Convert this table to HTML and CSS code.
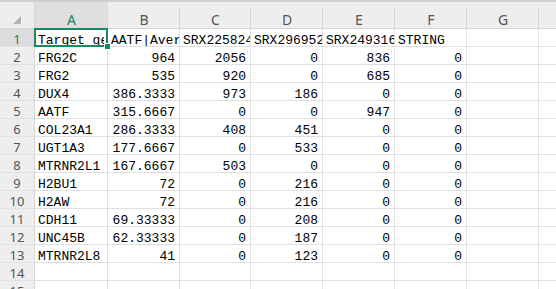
FILE: index.html
```html
<!DOCTYPE html>
<html>
<head>
<meta charset="utf-8">
<link rel="stylesheet" href="styles.css">
</head>
<body>
<div class="sheet">
  <div class="corner"><svg width="8" height="8" viewBox="0 0 8 8"><path d="M8 0V8H0Z" fill="#b4b4b4"/></svg></div>
  <div class="ch active">A</div><div class="ch">B</div><div class="ch">C</div><div class="ch">D</div><div class="ch">E</div><div class="ch">F</div><div class="ch">G</div><div class="ch last"></div>

  <div class="rh active">1</div>
  <div class="c sel-cell"><span class="txt">Target gene</span><div class="sel"><span class="handle"></span></div></div><div class="c">AATF|Average</div><div class="c">SRX2258241</div><div class="c">SRX2969521</div><div class="c">SRX2493160</div><div class="c">STRING</div><div class="c"></div><div class="c"></div>

  <div class="rh">2</div>
  <div class="c">FRG2C</div><div class="c n">964</div><div class="c n">2056</div><div class="c n">0</div><div class="c n">836</div><div class="c n">0</div><div class="c"></div><div class="c"></div>

  <div class="rh">3</div>
  <div class="c">FRG2</div><div class="c n">535</div><div class="c n">920</div><div class="c n">0</div><div class="c n">685</div><div class="c n">0</div><div class="c"></div><div class="c"></div>

  <div class="rh">4</div>
  <div class="c">DUX4</div><div class="c n">386.3333</div><div class="c n">973</div><div class="c n">186</div><div class="c n">0</div><div class="c n">0</div><div class="c"></div><div class="c"></div>

  <div class="rh">5</div>
  <div class="c">AATF</div><div class="c n">315.6667</div><div class="c n">0</div><div class="c n">0</div><div class="c n">947</div><div class="c n">0</div><div class="c"></div><div class="c"></div>

  <div class="rh">6</div>
  <div class="c">COL23A1</div><div class="c n">286.3333</div><div class="c n">408</div><div class="c n">451</div><div class="c n">0</div><div class="c n">0</div><div class="c"></div><div class="c"></div>

  <div class="rh">7</div>
  <div class="c">UGT1A3</div><div class="c n">177.6667</div><div class="c n">0</div><div class="c n">533</div><div class="c n">0</div><div class="c n">0</div><div class="c"></div><div class="c"></div>

  <div class="rh">8</div>
  <div class="c">MTRNR2L1</div><div class="c n">167.6667</div><div class="c n">503</div><div class="c n">0</div><div class="c n">0</div><div class="c n">0</div><div class="c"></div><div class="c"></div>

  <div class="rh">9</div>
  <div class="c">H2BU1</div><div class="c n">72</div><div class="c n">0</div><div class="c n">216</div><div class="c n">0</div><div class="c n">0</div><div class="c"></div><div class="c"></div>

  <div class="rh">10</div>
  <div class="c">H2AW</div><div class="c n">72</div><div class="c n">0</div><div class="c n">216</div><div class="c n">0</div><div class="c n">0</div><div class="c"></div><div class="c"></div>

  <div class="rh">11</div>
  <div class="c">CDH11</div><div class="c n">69.33333</div><div class="c n">0</div><div class="c n">208</div><div class="c n">0</div><div class="c n">0</div><div class="c"></div><div class="c"></div>

  <div class="rh">12</div>
  <div class="c">UNC45B</div><div class="c n">62.33333</div><div class="c n">0</div><div class="c n">187</div><div class="c n">0</div><div class="c n">0</div><div class="c"></div><div class="c"></div>

  <div class="rh">13</div>
  <div class="c">MTRNR2L8</div><div class="c n">41</div><div class="c n">0</div><div class="c n">123</div><div class="c n">0</div><div class="c n">0</div><div class="c"></div><div class="c"></div>

  <div class="rh">14</div>
  <div class="c"></div><div class="c"></div><div class="c"></div><div class="c"></div><div class="c"></div><div class="c"></div><div class="c"></div><div class="c"></div>

  <div class="rh">15</div>
  <div class="c"></div><div class="c"></div><div class="c"></div><div class="c"></div><div class="c"></div><div class="c"></div><div class="c"></div><div class="c"></div>
</div>
</body>
</html>
```
FILE: styles.css
```css
html, body {
  margin: 0;
  padding: 0;
  background: #ffffff;
  overflow: hidden;
  width: 556px;
  height: 289px;
}
.sheet {
  border-top: 2px solid #cfcfcf;
  display: grid;
  grid-template-columns: 35px 73px 72px 71px 72px 72px 72px 72px 40px;
  grid-template-rows: 27px repeat(15, 18px);
}
.corner {
  background: #eeeeee;
  border-right: 1px solid #d6d6d6;
  border-bottom: 1px solid #d6d6d6;
  box-sizing: border-box;
  display: flex;
  align-items: flex-end;
  justify-content: flex-end;
  padding: 0 13px 4px 0;
}
.corner svg { display: block; }
.ch {
  background: linear-gradient(#d6d6d6, #d6d6d6) right bottom / 1px 20px no-repeat, #eeeeee;
  border-bottom: 1px solid #d6d6d6;
  box-sizing: border-box;
  font-family: "Noto Sans", "Liberation Sans", sans-serif;
  font-size: 14px;
  color: #555555;
  display: flex;
  align-items: center;
  justify-content: center;
  padding-top: 8px;
}
.ch.active {
  background: linear-gradient(#d6d6d6, #d6d6d6) right bottom / 1px 20px no-repeat, #dfdfdf;
  color: #178a5e;
}
.rh {
  background: #eeeeee;
  border-right: 1px solid #d6d6d6;
  border-bottom: 1px solid #e2e2e2;
  box-sizing: border-box;
  font-family: "Noto Sans", "Liberation Sans", sans-serif;
  font-size: 13px;
  color: #555555;
  display: flex;
  align-items: center;
  justify-content: center;
  padding-top: 2px;
}
.rh.active {
  background: #dcdcdc;
  color: #178a5e;
}
.c {
  border-right: 1px solid #e0e0e0;
  border-bottom: 1px solid #e0e0e0;
  box-sizing: border-box;
  font-family: "Liberation Mono", "DejaVu Sans Mono", monospace;
  font-size: 13px;
  line-height: 23px;
  color: #000000;
  white-space: nowrap;
  overflow: hidden;
  padding: 0 3px;
}
.c.n { text-align: right; padding-right: 4px; }
.sel-cell {
  position: relative;
  overflow: visible;
}
.txt {
  display: block;
  overflow: hidden;
  height: 17px;
}
.sel {
  position: absolute;
  left: -1px;
  top: -1px;
  right: -1px;
  bottom: -1px;
  border: 2px solid #178a5e;
  pointer-events: none;
}
.handle {
  position: absolute;
  right: -5px;
  bottom: -5px;
  width: 5px;
  height: 5px;
  background: #178a5e;
  border: 1px solid #ffffff;
}
```
